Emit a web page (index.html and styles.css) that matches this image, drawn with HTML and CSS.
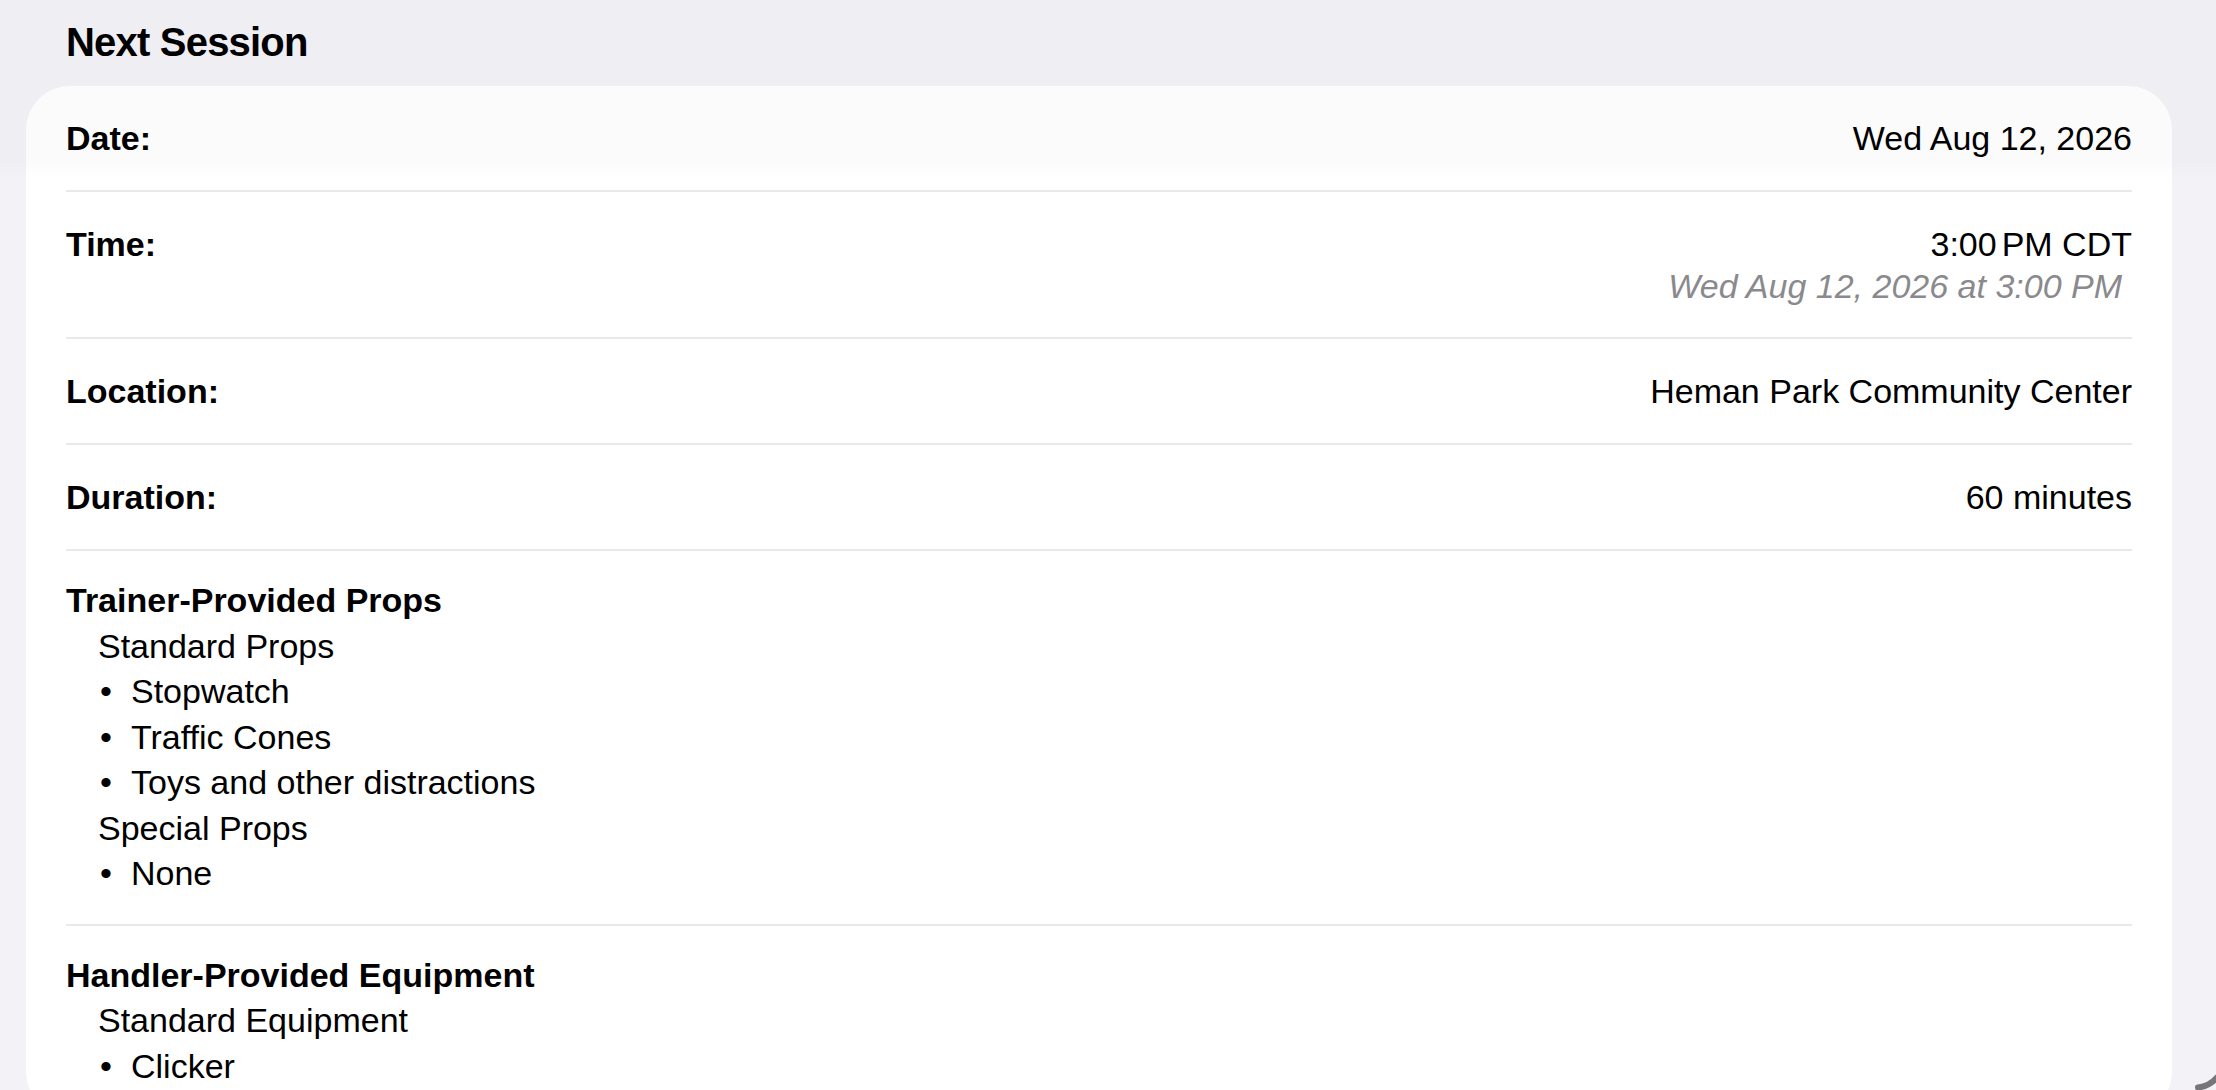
FILE: index.html
```html
<!DOCTYPE html>
<html lang="en">
<head>
<meta charset="utf-8">
<title>Next Session</title>
<link rel="stylesheet" href="styles.css">
</head>
<body>
<div class="page">
  <h1 class="title">Next Session</h1>
  <div class="card">
    <div class="row">
      <span class="label">Date:</span>
      <span class="value">Wed Aug 12, 2026</span>
    </div>
    <div class="row">
      <span class="label">Time:</span>
      <div class="value-stack">
        <span class="value">3:00<span class="ampm">PM CDT</span></span>
        <span class="sub">Wed Aug 12, 2026 at 3:00 PM</span>
      </div>
    </div>
    <div class="row">
      <span class="label">Location:</span>
      <span class="value">Heman Park Community Center</span>
    </div>
    <div class="row">
      <span class="label">Duration:</span>
      <span class="value">60 minutes</span>
    </div>
    <div class="section">
      <div class="section-title">Trainer-Provided Props</div>
      <div class="group-title">Standard Props</div>
      <ul class="bullets">
        <li>Stopwatch</li>
        <li>Traffic Cones</li>
        <li>Toys and other distractions</li>
      </ul>
      <div class="group-title">Special Props</div>
      <ul class="bullets">
        <li>None</li>
      </ul>
    </div>
    <div class="section last">
      <div class="section-title">Handler-Provided Equipment</div>
      <div class="group-title">Standard Equipment</div>
      <ul class="bullets">
        <li>Clicker</li>
      </ul>
    </div>
  </div>
</div>
<div class="edge-effect"></div>
<svg class="scroll-indicator" width="24" height="16" viewBox="0 0 24 16">
  <path d="M6 13.5 Q 17 12.5 25 3.5" fill="none" stroke="#76767a" stroke-width="6" stroke-linecap="round"/>
</svg>
</body>
</html>
```
FILE: styles.css
```css
html, body {
  margin: 0;
  padding: 0;
}
body {
  background: #f2f2f7;
  font-family: "Liberation Sans", Arial, sans-serif;
  color: #000;
  height: 1090px;
  overflow: hidden;
}
.page {
  padding: 18px 44px 0 26px;
}
.title {
  margin: 0 0 20px 40px;
  font-size: 40px;
  line-height: 48px;
  font-weight: 700;
  letter-spacing: -0.8px;
}
.card {
  background: #ffffff;
  border-radius: 44px;
  padding: 0 40px;
}
.row {
  display: flex;
  justify-content: space-between;
  align-items: flex-start;
  padding: 30px 0;
  border-bottom: 2px solid #e9e9eb;
  font-size: 34px;
  line-height: 44px;
}
.label {
  font-weight: 700;
}
.value-stack {
  display: flex;
  flex-direction: column;
  align-items: flex-end;
}
.ampm {
  margin-left: 5px;
}
.sub {
  font-style: italic;
  color: #8a8a8e;
  line-height: 41px;
  margin-right: 10px;
}
.section {
  padding: 27px 0;
  border-bottom: 2px solid #e9e9eb;
  font-size: 34px;
  line-height: 45.5px;
}
.section.last {
  border-bottom: none;
}
.section-title {
  font-weight: 700;
}
.group-title {
  padding-left: 32px;
}
.bullets {
  list-style: none;
  margin: 0;
  padding: 0 0 0 34px;
}
.bullets li {
  display: flex;
}
.bullets li::before {
  content: "\2022";
  width: 31px;
  flex: none;
}
.edge-effect {
  position: fixed;
  top: 0;
  left: 0;
  right: 0;
  height: 180px;
  pointer-events: none;
  background: linear-gradient(to bottom, rgba(0,0,0,0.014) 0, rgba(0,0,0,0.014) 160px, rgba(0,0,0,0) 180px);
}
.scroll-indicator {
  position: fixed;
  right: 0;
  bottom: 0;
}
```
